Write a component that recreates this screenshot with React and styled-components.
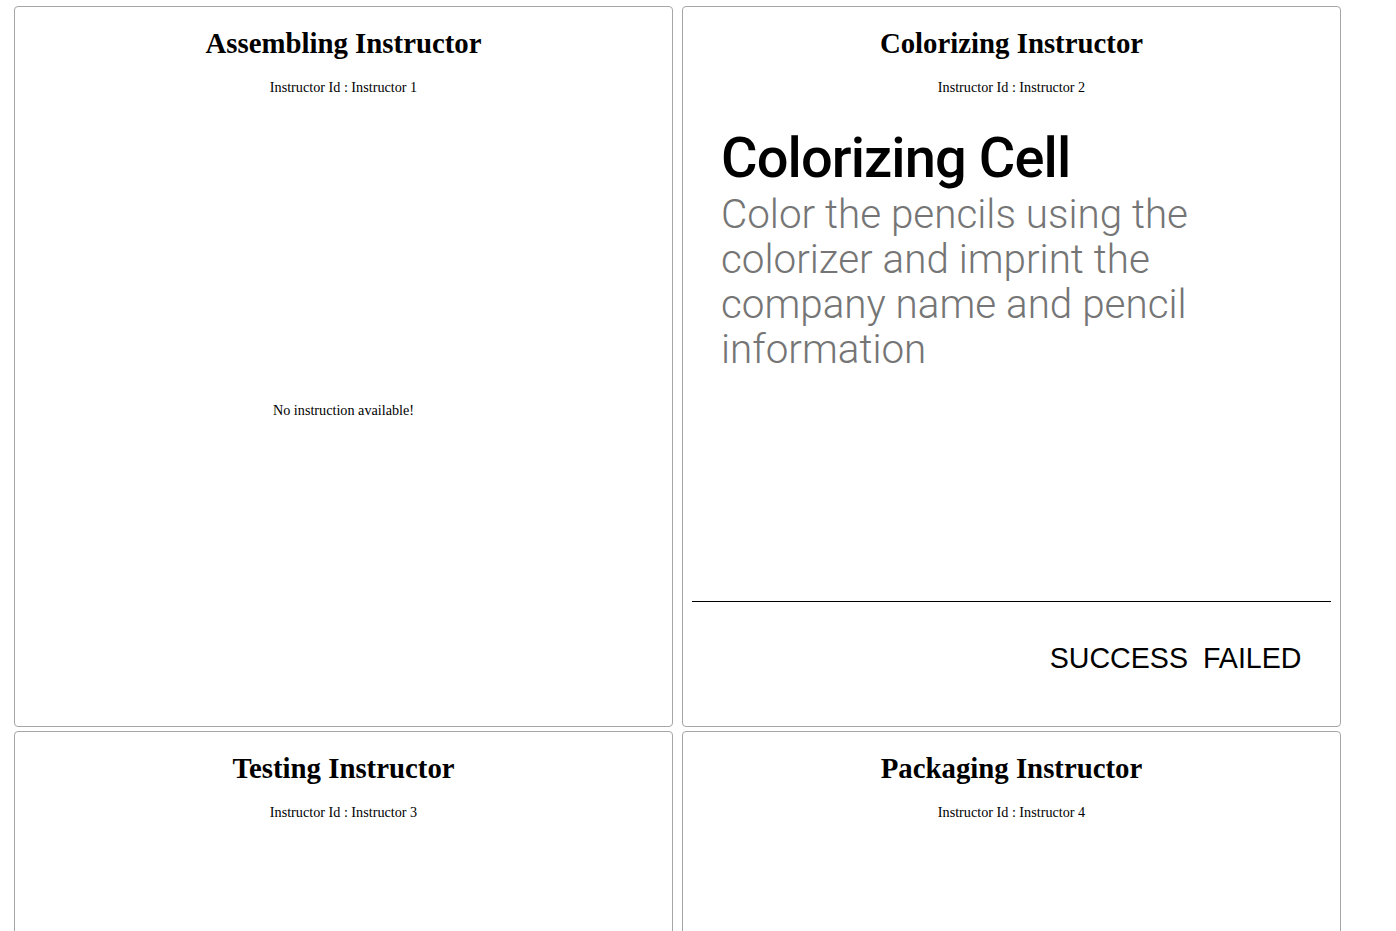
import React from "react";
import styled, { createGlobalStyle } from "styled-components";

const GlobalStyle = createGlobalStyle`
  body {
    margin: 0;
    background: #fff;
    font-family: "Liberation Serif", "Times New Roman", serif;
    color: #000;
  }
`;

const Board = styled.div`
  display: grid;
  grid-template-columns: 659px 659px;
  grid-auto-rows: 721px;
  column-gap: 9px;
  row-gap: 4px;
  padding: 6px 0 0 14px;
`;

const Card = styled.div`
  box-sizing: border-box;
  border: 1px solid #a6a6a6;
  border-radius: 4px;
  display: flex;
  flex-direction: column;
  background: #fff;
  overflow: hidden;
`;

const CardHeader = styled.div`
  padding-top: 21px;
  text-align: center;
`;

const Title = styled.h2`
  margin: 0;
  font-size: 28.8px;
  font-weight: bold;
  line-height: 31px;
`;

const InstructorId = styled.div`
  margin-top: 20px;
  font-size: 14.2px;
  line-height: 16px;
`;

const EmptyBody = styled.div`
  flex: 1;
  display: flex;
  align-items: center;
  justify-content: center;
  font-size: 14.2px;
`;

const InstructionBody = styled.div`
  flex: 1;
  padding: 32px 40px 0 38px;
  font-family: Roboto, "Noto Sans", sans-serif;
`;

const CellName = styled.div`
  font-size: 56px;
  font-weight: 500;
  letter-spacing: -0.9px;
  line-height: 62px;
  color: #000;
`;

const CellText = styled.div`
  max-width: 520px;
  margin-top: 3px;
  font-size: 40.4px;
  font-weight: 300;
  line-height: 45px;
  color: #757575;
`;

const Divider = styled.hr`
  margin: 0 9px;
  border: none;
  border-top: 1px solid #000;
  height: 0;
`;

const Footer = styled.div`
  height: 124px;
  box-sizing: border-box;
  padding: 41px 31px 0 0;
  display: flex;
  justify-content: flex-end;
  align-items: flex-start;
`;

const ResultButton = styled.button`
  background: none;
  border: none;
  padding: 0 7.5px;
  margin: 0;
  font-family: "Liberation Sans", Arial, sans-serif;
  font-size: 28.6px;
  line-height: 31px;
  color: #000;
  cursor: pointer;
`;

const instructors = [
  { id: 1, name: "Assembling Instructor" },
  {
    id: 2,
    name: "Colorizing Instructor",
    instruction: {
      cell: "Colorizing Cell",
      text: "Color the pencils using the colorizer and imprint the company name and pencil information",
    },
  },
  { id: 3, name: "Testing Instructor" },
  { id: 4, name: "Packaging Instructor" },
];

function InstructorCard({ item }) {
  return (
    <Card>
      <CardHeader>
        <Title>{item.name}</Title>
        <InstructorId>Instructor Id : Instructor {item.id}</InstructorId>
      </CardHeader>
      {item.instruction ? (
        <>
          <InstructionBody>
            <CellName>{item.instruction.cell}</CellName>
            <CellText>{item.instruction.text}</CellText>
          </InstructionBody>
          <Divider />
          <Footer>
            <ResultButton>SUCCESS</ResultButton>
            <ResultButton>FAILED</ResultButton>
          </Footer>
        </>
      ) : (
        <EmptyBody>No instruction available!</EmptyBody>
      )}
    </Card>
  );
}

export default function App() {
  return (
    <>
      <GlobalStyle />
      <Board>
        {instructors.map((item) => (
          <InstructorCard key={item.id} item={item} />
        ))}
      </Board>
    </>
  );
}
